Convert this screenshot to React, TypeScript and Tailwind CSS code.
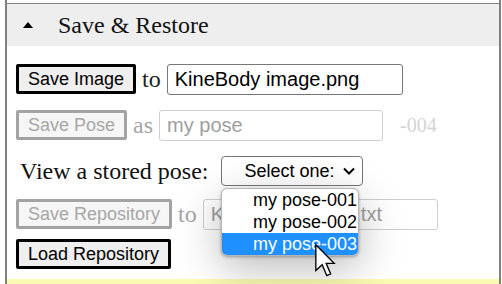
const serif = "font-['Liberation_Serif','Times_New_Roman',serif]";
const sans = "font-['Liberation_Sans',Arial,sans-serif]";

function Btn({ label, disabled }: { label: string; disabled?: boolean }) {
  return (
    <button
      disabled={disabled}
      className={`${sans} h-[30px] rounded-[2px] border-[3px] px-[9px] text-[18px] leading-none ${
        disabled
          ? "border-[#a3a3a3] bg-[#f6f6f6] text-[#a6a6a6]"
          : "border-black bg-[#efefef] text-black"
      }`}
    >
      {label}
    </button>
  );
}

function Field({
  value,
  width,
  disabled,
}: {
  value: string;
  width: string;
  disabled?: boolean;
}) {
  return (
    <div
      className={`${sans} ${width} flex h-[31px] items-center rounded-[3px] border px-[7px] text-[20px] leading-none ${
        disabled ? "border-[#cfcfcf] text-[#9e9e9e]" : "border-[#767676] text-black"
      }`}
    >
      {value}
    </div>
  );
}

const poses = ["my pose-001", "my pose-002", "my pose-003"];

export default function App() {
  return (
    <div className="relative h-[284px] w-[502px] overflow-hidden bg-white">
      <div className="ml-[5px] mr-[1px] flex h-full flex-col border-x-2 border-[#808080] pt-[3px]">
        {/* section header */}
        <div className="flex h-[43px] items-center border-t border-[#808080] bg-[#eeeeee] pl-[16px]">
          <svg width="10" height="6" viewBox="0 0 10 6">
            <polygon points="5,0 10,6 0,6" fill="black" />
          </svg>
          <span className={`${serif} ml-[25px] text-[24px] leading-none text-[#111]`}>
            Save &amp; Restore
          </span>
        </div>

        <div className="flex flex-col pl-[9px]">
          <div className="mt-[16px] flex h-[34px] items-center">
            <Btn label="Save Image" />
            <span className={`${serif} mx-[6px] text-[24px] text-[#222]`}>to</span>
            <Field value="KineBody image.png" width="w-[236px]" />
          </div>

          <div className="mt-[12px] flex h-[34px] items-center">
            <Btn label="Save Pose" disabled />
            <span className={`${serif} mx-[6px] text-[24px] text-[#a6a6a6]`}>as</span>
            <Field value="my pose" width="w-[224px]" disabled />
            <span className={`${serif} ml-[17px] text-[20px] text-[#d4d4d4]`}>-004</span>
          </div>

          <div className="mt-[12px] flex h-[34px] items-center">
            <span className={`${serif} ml-[4px] text-[24px] text-[#111]`}>
              View a stored pose:
            </span>
            <div
              className={`${sans} ml-[12px] flex h-[30px] w-[142px] items-center justify-end gap-[8px] rounded-[4px] border border-[#767676] pr-[7px] text-[18px] leading-none text-black`}
            >
              Select one:
              <svg width="12" height="8" viewBox="0 0 12 8">
                <polyline points="1,1.5 6,6.5 11,1.5" fill="none" stroke="black" strokeWidth="2" />
              </svg>
            </div>
          </div>

          <div className="mt-[9px] flex h-[34px] items-center">
            <Btn label="Save Repository" disabled />
            <span className={`${serif} mx-[6px] text-[24px] text-[#a6a6a6]`}>to</span>
            <Field value="KineBody poses.txt" width="w-[235px]" disabled />
          </div>

          <div className="mt-[7px] flex h-[32px] items-center">
            <Btn label="Load Repository" />
          </div>
        </div>

        <div className="mt-auto h-[5px] bg-[#fafab2]" />
      </div>

      {/* open select list */}
      <div
        className={`${sans} absolute left-[221px] top-[188px] w-[138px] overflow-hidden rounded-[6px] border border-[#b5b5b5] bg-white text-[18px] leading-none shadow-[0_1px_3px_rgba(0,0,0,0.3),0_12px_44px_rgba(0,0,0,0.28)]`}
      >
        {poses.map((p, i) => (
          <div
            key={p}
            className={`flex h-[22px] items-center justify-end pr-[1px] ${
              i === 2 ? "bg-[#1e90ff] text-white" : "text-black"
            }`}
          >
            {p}
          </div>
        ))}
      </div>

      {/* mouse pointer */}
      <svg
        className="absolute left-[314px] top-[243px]"
        width="22"
        height="35"
        viewBox="0 0 13 21"
      >
        <path
          d="M1,1 L1,16.5 L4.8,13 L7.6,19.6 L9.9,18.6 L7.2,12.2 L12,12.2 Z"
          fill="white"
          stroke="black"
          strokeWidth="0.8"
          strokeLinejoin="miter"
        />
      </svg>
    </div>
  );
}
